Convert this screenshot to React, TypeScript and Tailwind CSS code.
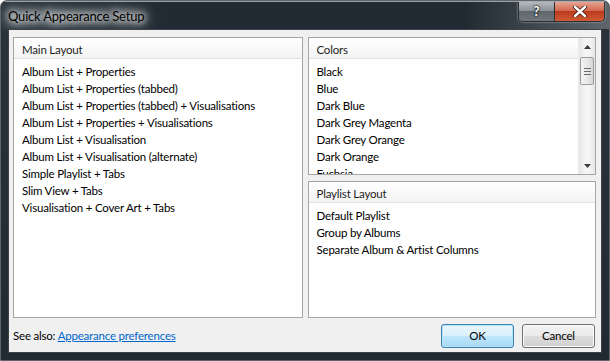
import React from 'react'

const mainLayouts = [
	'Album List + Properties',
	'Album List + Properties (tabbed)',
	'Album List + Properties (tabbed) + Visualisations',
	'Album List + Properties + Visualisations',
	'Album List + Visualisation',
	'Album List + Visualisation (alternate)',
	'Simple Playlist + Tabs',
	'Slim View + Tabs',
	'Visualisation + Cover Art + Tabs',
]

const colors = [
	'Black',
	'Blue',
	'Dark Blue',
	'Dark Grey Magenta',
	'Dark Grey Orange',
	'Dark Orange',
	'Fuchsia',
]

const playlistLayouts = ['Default Playlist', 'Group by Albums', 'Separate Album & Artist Columns']

const font = "font-['Lato','Liberation_Sans',sans-serif]"

function ListHeader({ title }: { title: string }) {
	return (
		<div className="h-[21px] shrink-0 flex items-center pl-[8px] pt-[4px] bg-[linear-gradient(#ffffff,#f3f3f3)] border-b border-[#e3e3e3] text-[#1e1e1e]">
			{title}
		</div>
	)
}

function ListItems({ items }: { items: string[] }) {
	return (
		<div className="pt-[4px]">
			{items.map(item => (
				<div key={item} className="h-[17px] leading-[17px] pl-[8px] whitespace-nowrap text-black">
					{item}
				</div>
			))}
		</div>
	)
}

function Scrollbar() {
	return (
		<div className="w-[17px] shrink-0 flex flex-col bg-[linear-gradient(90deg,#e6e6e6,#f5f5f5_40%,#f5f5f5_60%,#e6e6e6)] border-l border-[#ececec]">
			<div className="h-[17px] flex items-center justify-center">
				<svg width="7" height="4" viewBox="0 0 7 4">
					<path d="M0 4 L3.5 0 L7 4 Z" fill="#3b3b3b" />
				</svg>
			</div>
			<div className="mt-[2px] mx-[1px] h-[28px] rounded-[2px] border border-[#9b9b9b] bg-[linear-gradient(90deg,#f3f3f3,#e8e8e8_50%,#d6d6d6)] flex flex-col items-center justify-center gap-[2px]">
				<div className="w-[7px] h-px bg-[#6b6b6b]" />
				<div className="w-[7px] h-px bg-[#6b6b6b]" />
				<div className="w-[7px] h-px bg-[#6b6b6b]" />
			</div>
			<div className="flex-1" />
			<div className="h-[17px] flex items-center justify-center">
				<svg width="7" height="4" viewBox="0 0 7 4">
					<path d="M0 0 L3.5 4 L7 0 Z" fill="#3b3b3b" />
				</svg>
			</div>
		</div>
	)
}

export default function App() {
	return (
		<div className={`w-[610px] h-[361px] flex flex-col rounded-t-[7px] border border-[#5e666c] bg-[linear-gradient(180deg,#2a333b,#222a31)] overflow-hidden text-[11.5px] tracking-[-0.2px] ${font}`}>
			<div className="h-[28px] shrink-0 flex items-start justify-between bg-[linear-gradient(100deg,#2c363e_0%,#212a32_30%,#212a32_76%,#5e666a_100%)] border-t border-[#9aa0a4]">
				<div className="pl-[7px] pt-[5px] text-[13px] tracking-[-0.2px] text-black [text-shadow:0_0_6px_#fff,0_0_10px_#fff,0_0_14px_#fff,0_0_18px_#e8eaec]">
					Quick Appearance Setup
				</div>
				<div className="mr-[4px] flex border border-t-0 border-[#2b2f33] rounded-b-[5px] overflow-hidden shadow-[0_0_2px_#c8ccd0]">
					<div className="w-[36px] h-[19px] flex items-center justify-center bg-[linear-gradient(180deg,#b3b9bd,#8b9297_45%,#5f676c_50%,#6f777b)] border-r border-[#2b2f33] text-white font-bold text-[13px] leading-none [text-shadow:0_0_2px_#000,0_0_2px_#000]">
						?
					</div>
					<div className="w-[49px] h-[19px] flex items-center justify-center bg-[linear-gradient(180deg,#e8a494,#d2694f_45%,#bd3a1e_50%,#cf5a35)]">
						<svg width="14" height="11" viewBox="0 0 14 11">
							<path
								d="M2 1 L12 10 M12 1 L2 10"
								stroke="#3a1a12"
								strokeWidth="4"
								strokeLinecap="round"
							/>
							<path
								d="M2 1 L12 10 M12 1 L2 10"
								stroke="#ffffff"
								strokeWidth="2.4"
								strokeLinecap="round"
							/>
						</svg>
					</div>
				</div>
			</div>

			<div className="flex-1 mx-[7px] mb-[7px] flex flex-col bg-[#f0f0f0] border border-[#3b4249]">
				<div className="flex gap-[5px] pl-[4px] pt-[7px] pr-[5px]">
					<div className="w-[290px] h-[281px] bg-white border border-[#a5a5a5] flex flex-col">
						<ListHeader title="Main Layout" />
						<ListItems items={mainLayouts} />
					</div>
					<div className="w-[289px] flex flex-col gap-[6px]">
						<div className="h-[138px] bg-white border border-[#a5a5a5] flex overflow-hidden">
							<div className="flex-1 flex flex-col overflow-hidden">
								<ListHeader title="Colors" />
								<ListItems items={colors} />
							</div>
							<Scrollbar />
						</div>
						<div className="h-[137px] bg-white border border-[#a5a5a5] flex flex-col">
							<ListHeader title="Playlist Layout" />
							<ListItems items={playlistLayouts} />
						</div>
					</div>
				</div>

				<div className="flex-1 flex items-center justify-between pl-[4px] pr-[6px] pt-[1px]">
					<div className="text-black">
						See also:{' '}
						<a href="#" className="text-[#0066cc] underline">
							Appearance preferences
						</a>
					</div>
					<div className="flex gap-[8px]">
						<button className="w-[73px] h-[24px] rounded-[3px] border border-[#3c7fb1] bg-[linear-gradient(180deg,#eaf6fd,#d9f0fc_50%,#bee6fd_50%,#a7d9f5)] shadow-[inset_0_0_0_1px_#b4e4fb] text-black">
							OK
						</button>
						<button className="w-[73px] h-[24px] rounded-[3px] border border-[#707070] bg-[linear-gradient(180deg,#f2f2f2,#ebebeb_50%,#dddddd_50%,#cfcfcf)] shadow-[inset_0_0_0_1px_#fcfcfc] text-black">
							Cancel
						</button>
					</div>
				</div>
			</div>
		</div>
	)
}
